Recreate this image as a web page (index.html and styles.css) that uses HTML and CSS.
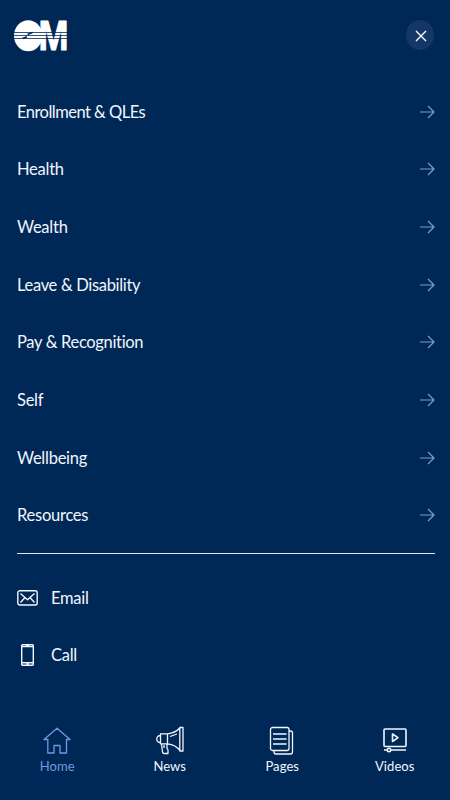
FILE: index.html
```
<!DOCTYPE html>
<html lang="en">
<head>
<meta charset="utf-8">
<title>Menu</title>
<link rel="stylesheet" href="styles.css">
</head>
<body>
<div class="screen">
  <header class="header">
    <svg class="logo" width="58" height="42" viewBox="0 0 58 42">
      <ellipse cx="14.2" cy="15.7" rx="14.2" ry="15.5" fill="#fff"/>
      <text class="logo-m" x="24.500" y="30.200" textLength="30" lengthAdjust="spacingAndGlyphs">M</text>
      <path d="M0 12.500H53M0 15.500H53M0 18.500H53" stroke="#002856" stroke-width=".8"/>
      <path d="M8.500 18.500L13 16.800M13.500 14.500L18.500 12.500" stroke="#002856" stroke-width="1.600"/>
    </svg>
    <button class="close" aria-label="Close"><svg width="12" height="12" viewBox="0 0 12 12"><path d="M1 1L11 11M11 1L1 11"/></svg></button>
  </header>
  <nav class="menu">
    <a class="row"><span class="enroll">Enrollment &amp; QLEs</span><svg class="arrow" viewBox="0 0 16 14"><path d="M1 7H15M9 1L15 7L9 13"/></svg></a>
    <a class="row"><span class="health">Health</span><svg class="arrow" viewBox="0 0 16 14"><path d="M1 7H15M9 1L15 7L9 13"/></svg></a>
    <a class="row"><span class="wealth">Wealth</span><svg class="arrow" viewBox="0 0 16 14"><path d="M1 7H15M9 1L15 7L9 13"/></svg></a>
    <a class="row"><span class="leave">Leave &amp; Disability</span><svg class="arrow" viewBox="0 0 16 14"><path d="M1 7H15M9 1L15 7L9 13"/></svg></a>
    <a class="row"><span class="pay">Pay &amp; Recognition</span><svg class="arrow" viewBox="0 0 16 14"><path d="M1 7H15M9 1L15 7L9 13"/></svg></a>
    <a class="row"><span class="self">Self</span><svg class="arrow" viewBox="0 0 16 14"><path d="M1 7H15M9 1L15 7L9 13"/></svg></a>
    <a class="row"><span class="wellbeing">Wellbeing</span><svg class="arrow" viewBox="0 0 16 14"><path d="M1 7H15M9 1L15 7L9 13"/></svg></a>
    <a class="row"><span class="resources">Resources</span><svg class="arrow" viewBox="0 0 16 14"><path d="M1 7H15M9 1L15 7L9 13"/></svg></a>
  </nav>
  <div class="contacts">
    <a class="contact"><svg width="21" height="16" viewBox="0 0 21 16"><rect x=".8" y=".8" width="19.400" height="14.200" rx="2"/><path d="M3.500 3.500L10.500 9.700L17.500 3.500M3.500 12.500L7.600 8M17.500 12.500L13.400 8"/></svg><span class="email">Email</span></a>
    <a class="contact"><svg width="21" height="22" viewBox="0 0 21 22"><rect x="4.700" y=".7" width="11.600" height="20.600" rx="1"/><path d="M5 2.600H16M5 18.800H16M9 1.500H12M9.500 20.200H11.500"/></svg><span class="call">Call</span></a>
  </div>
  <footer class="tabs">
    <a class="tab active"><svg width="28" height="28" viewBox="0 0 28 28"><path d="M5 12.500H1L14 1.200L27 12.500H23.500V26H17V18.500H11V26H4.800V12.500Z"/></svg><span class="home">Home</span></a>
    <a class="tab"><svg width="30" height="30" viewBox="0 0 30 30"><path d="M5.500 7.800H12.500V17.800H5.500ZM5.500 9.500C.5 9.500.5 16.500 5.500 16.500M12.500 7.800C18 7.300 22 5 24.800 2V24.400C22 20.500 18 18.500 12.500 17.800M24.800 1.500H28V25H24.800ZM15 10.500L22 8M6.500 18L7.500 26Q8 28 10.500 27.500H13V24L12 22.500V18M9 19V22"/></svg><span class="news">News</span></a>
    <a class="tab"><svg width="28" height="30" viewBox="0 0 28 30"><rect x="2.500" y="1.500" width="18.500" height="23" rx="2"/><path d="M21 5H22.500Q24.500 5 24.500 7V26Q24.500 28 22.500 28H8Q6 28 6 26V24.500M5 8H18.500M5 13H18.500M5 18H18.500"/></svg><span class="pages">Pages</span></a>
    <a class="tab videos-tab"><svg width="26" height="28" viewBox="0 0 26 28"><rect x="2" y="2" width="22" height="17.500" rx="1"/><path d="M10.500 7V14.500L16 10.700ZM2 23H5M9 23H24"/><circle cx="7" cy="23" r="1.700"/></svg><span class="videos">Videos</span></a>
  </footer>
</div>
</body>
</html>
```
FILE: styles.css
```
* { box-sizing: border-box; }
body { margin: 0; background: #002856; }
.screen {
  width: 450px; height: 800px; overflow: hidden;
  display: flex; flex-direction: column;
  background: #002856; color: #f2f6ff;
  font-family: Lato, "Liberation Sans", sans-serif;
  font-size: 16px; font-variant-ligatures: none;
}
svg { fill: none; stroke: currentColor; stroke-width: 1.4; stroke-linejoin: round; flex: none; }
.header {
  height: 82.7px; padding: 20px 16px 0 14px;
  display: flex; justify-content: space-between; align-items: flex-start;
}
.logo { stroke: none; overflow: visible; }
.logo-m { font: bold 42px "Liberation Sans", sans-serif; fill: #fff; stroke: #fff; stroke-width: 1; }
.close {
  width: 28px; height: 30px; padding: 0; border: 0; border-radius: 50%;
  background: #143767; color: #fff;
  display: flex; align-items: center; justify-content: center;
}
.close svg { margin-left: 1px; margin-top: 1px; }
.menu { margin: 0 15px 0 17px; height: 471px; border-bottom: 1px solid #dde5f2; }
.row { height: 57.7px; display: flex; align-items: center; justify-content: space-between; }
.row span, .contact span { font-size: 16.5px; letter-spacing: -.25px; }
.row .enroll { letter-spacing: -.52px; }
.row .leave { letter-spacing: -.32px; }
.row .pay { letter-spacing: -.32px; }
.arrow { width: 16px; height: 14px; color: #7d9bd0; stroke-width: 1.2; }
.contacts { padding: 15px 17px 0; height: 169.300px; }
.contact { height: 57.7px; display: flex; align-items: center; gap: 13px; }
.tabs { display: flex; height: 77px; }
.tab {
  flex: 1 1 0; min-width: 0; display: flex; flex-direction: column; align-items: center;
  font-size: 13px; line-height: 18px; padding-left: 2px;
}
.tab svg { height: 30px; margin-top: 3px; margin-bottom: 1px; stroke-width: 1.3; }
.tab span { letter-spacing: .1px; }
.tab.videos-tab svg { stroke-width: 1.6; margin-left: 1px; }
.active { color: #7099df; }
```
